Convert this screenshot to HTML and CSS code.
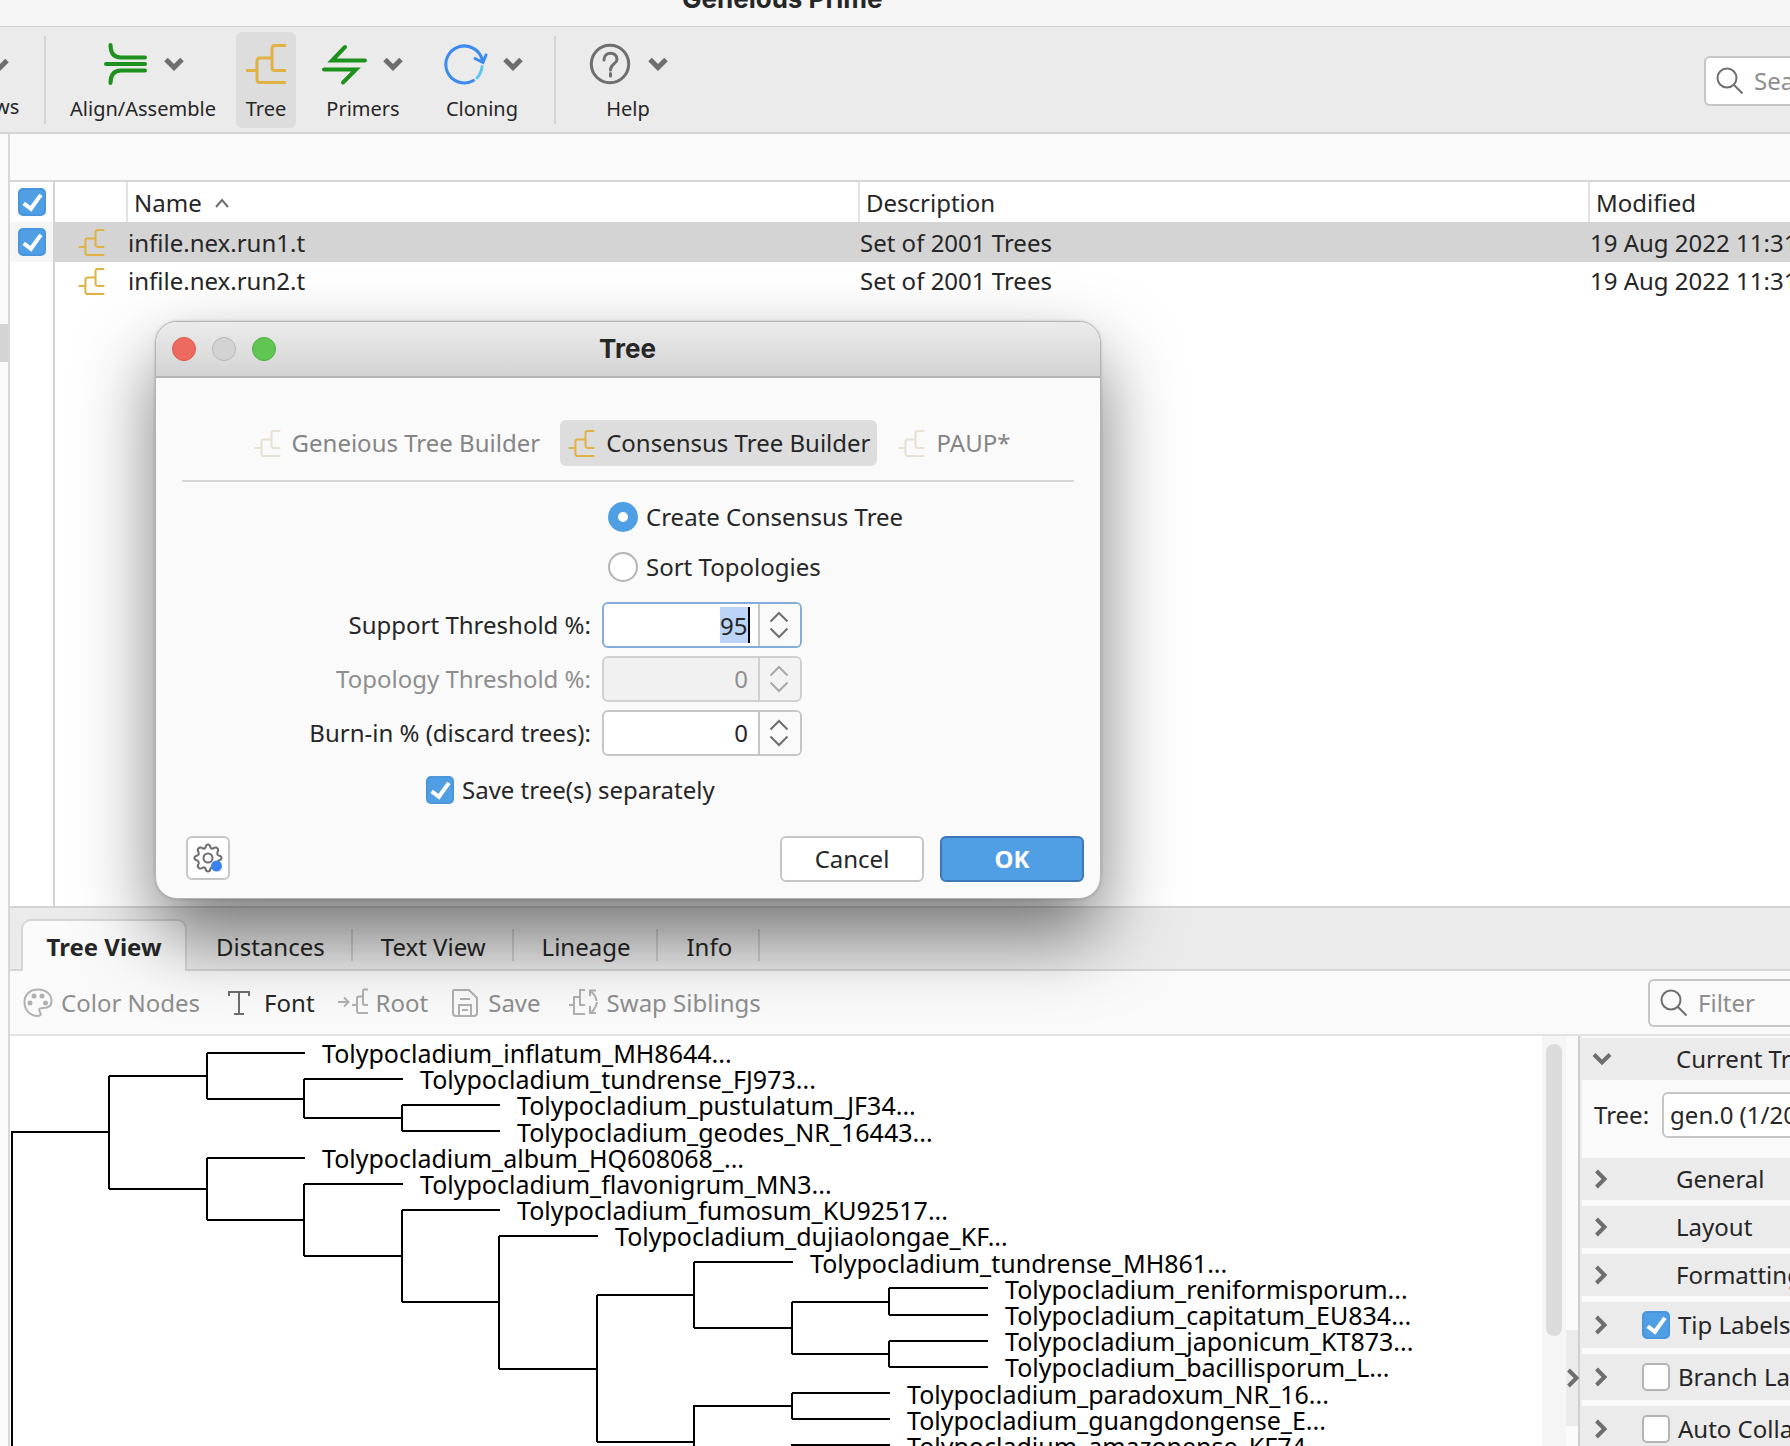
FILE: index.html
```html
<!DOCTYPE html>
<html lang="en">
<head>
<meta charset="utf-8">
<meta name="viewport" content="width=device-width, initial-scale=1">
<title>Geneious Prime</title>
<link rel="stylesheet" href="styles.css">
</head>
<body>
<svg class="defs" aria-hidden="true">
  <symbol id="i-tree" viewBox="0 0 40 40"><path d="M1 26.500H11M39 1.500H29Q26 1.500 26 4.500V23.500Q26 26.500 29 26.500H39M26 14H14Q11 14 11 17V35.500Q11 38.500 14 38.500H39"/></symbol>
  <symbol id="i-down" viewBox="0 0 20 14"><path d="M2 2.500L10 10.500L18 2.500"/></symbol>
  <symbol id="i-right" viewBox="0 0 14 20"><path d="M2.500 2L10.500 10L2.500 18"/></symbol>
  <symbol id="i-search" viewBox="0 0 28 28"><circle cx="11" cy="11" r="9.500"/><path d="M17.500 17.500L26.500 26.500"/></symbol>
  <symbol id="i-steps" viewBox="0 0 20 28"><path d="M1.500 10.500L10 2L18.500 10.500M1.500 17.500L10 26L18.500 17.500"/></symbol>
</svg>

<header class="titlebar"><span>Geneious Prime</span></header>

<nav class="toolbar">
  <div class="clip"><svg class="chev"><use href="#i-down"/></svg><span>ws</span></div>
  <i class="rule"></i>
  <button class="tool t-align"><span class="icons"><svg class="big green" viewBox="0 0 40 40"><path d="M4.500 1C4.500 9 8 13.500 15 13.500H39M0 20H39M4.500 39C4.500 31 8 26.500 15 26.500H39"/></svg><svg class="chev"><use href="#i-down"/></svg></span>Align/Assemble</button>
  <button class="tool t-tree on"><span class="icons"><svg class="big gold"><use href="#i-tree"/></svg></span>Tree</button>
  <button class="tool t-prim"><span class="icons"><svg class="big green wide" viewBox="0 0 42 40"><path d="M22 3L9 16.500H42M1 25.500H33L20 38.500"/></svg><svg class="chev"><use href="#i-down"/></svg></span>Primers</button>
  <button class="tool t-clon"><span class="icons"><svg class="big wide" viewBox="0 0 42 40"><path class="blue" d="M29.500 36.500A18.500 18.500 0 1 1 38.500 17M31 14.500L39 18.500L42 11"/><path class="cyan" d="M38 22.500Q37.500 29 33 34"/></svg><svg class="chev"><use href="#i-down"/></svg></span>Cloning</button>
  <i class="rule"></i>
  <button class="tool t-help"><span class="icons"><svg class="big grey" viewBox="0 0 40 40"><circle cx="20" cy="20" r="18.700"/><path d="M14 16C14 7 27 7 27 15.500C27 20 20.500 19.500 20.500 26"/><path d="M20.500 29.500V32"/></svg><svg class="chev"><use href="#i-down"/></svg></span>Help</button>
  <label class="search"><svg><use href="#i-search"/></svg><input type="text" placeholder="Search" aria-label="Search"></label>
</nav>

<div class="workspace">
  <aside class="sources"><div class="picked"></div></aside>
  <main class="main">
    <div class="strip"></div>
    <section class="docs">
      <table>
        <colgroup><col class="c-check"><col class="c-icon"><col class="c-name"><col class="c-desc"><col class="c-mod"></colgroup>
        <thead><tr>
          <th><input type="checkbox" class="tick" checked aria-label="Select all"></th><th></th>
          <th>Name <svg class="sort" viewBox="0 0 16 10"><path d="M2 9L8 2L14 9"/></svg></th><th>Description</th><th>Modified</th>
        </tr></thead>
        <tbody>
          <tr class="sel"><td><input type="checkbox" class="tick" checked aria-label="Select infile.nex.run1.t"></td><td><svg class="mini gold"><use href="#i-tree"/></svg></td><td>infile.nex.run1.t</td><td>Set of 2001 Trees</td><td>19 Aug 2022 11:31</td></tr>
          <tr class="row"><td></td><td><svg class="mini gold"><use href="#i-tree"/></svg></td><td>infile.nex.run2.t</td><td>Set of 2001 Trees</td><td>19 Aug 2022 11:31</td></tr>
          <tr class="rest"><td></td><td></td><td></td><td></td><td></td></tr>
        </tbody>
      </table>
    </section>
    <div class="tabs" role="tablist">
      <button role="tab" class="tab active" aria-selected="true">Tree View</button>
      <button role="tab" class="tab">Distances</button>
      <button role="tab" class="tab">Text View</button>
      <button role="tab" class="tab">Lineage</button>
      <button role="tab" class="tab">Info</button>
    </div>
    <div class="viewbar">
      <button disabled><svg viewBox="0 0 30 30"><path d="M15 28C6 28 1.500 21 1.500 14C1.500 6.500 7 1.500 15 1.500C23 1.500 28.500 6.500 28.500 13C28.500 18 25 20 20 20C15.500 20 15.500 22 17 24C18.500 26 17.500 28 15 28Z"/><g class="fill"><circle cx="11" cy="8" r="2.500"/><circle cx="19" cy="8" r="2.500"/><circle cx="7" cy="15" r="2.500"/><circle cx="22.500" cy="15" r="2.500"/></g></svg>Color Nodes</button>
      <button class="v-font"><svg viewBox="0 0 24 30"><path d="M2 8V4H22V8M12 4V26M7 26H17"/></svg>Font</button>
      <button disabled><svg viewBox="0 0 30 30"><path d="M0 14H10M6 9.500L10.500 14L6 18.500M14 17H19M30 1.500H26Q25 1.500 25 3V15.500Q25 17 27 17H30M25 8.500H21Q19 8.500 19 10.500V23Q19 25 21 25H30"/></svg>Root</button>
      <button disabled><svg viewBox="0 0 30 30"><path d="M4 2H19L27 10V25Q27 28 24 28H6Q3 28 3 25V4Q3 2 4 2ZM9 28V17H21V28M10 11H20M12 22H18"/></svg>Save</button>
      <button class="v-swap" disabled><svg viewBox="0 0 30 30"><path d="M0 17H4M16 2H11V17H16M11 9H5V26H16"/><path d="M21 3Q27 7 27.500 13M21 8V2.500H27M28 14Q27 20 22 25M21 18V25H27"/></svg>Swap Siblings</button>
      <label class="filter"><svg><use href="#i-search"/></svg><input type="text" placeholder="Filter" aria-label="Filter"></label>
    </div>
    <div class="viewer">
      <div class="canvas">
        <svg class="phylo" width="1500" height="410" role="img" aria-label="Phylogenetic tree">
          <path d="M2 410V96H99M99 40V153M99 40H197M197 17V63M197 17H295M197 63H294M294 43V82M294 43H393M294 82H392M392 69V95M392 69H490M392 95H490M99 153H197M197 122V184M197 122H295M197 184H294M294 148V220M294 148H393M294 220H392M392 174V266M392 174H490M392 266H489M489 200V333M489 200H588M489 333H587M587 259V406M587 259H684M684 226V292M684 226H783M684 292H782M782 266V318M782 266H879M879 252V279M879 252H978M879 279H978M782 318H879M879 305V331M879 305H978M879 331H978M587 406H684M684 410V370H782M782 357V383M782 357H880M782 383H880M782 410V409H880"/>
          <g>
            <text x="312" y="27">Tolypocladium_inflatum_MH8644...</text>
            <text x="410" y="53">Tolypocladium_tundrense_FJ973...</text>
            <text x="507" y="79">Tolypocladium_pustulatum_JF34...</text>
            <text x="507" y="106">Tolypocladium_geodes_NR_16443...</text>
            <text x="312" y="132">Tolypocladium_album_HQ608068_...</text>
            <text x="410" y="158">Tolypocladium_flavonigrum_MN3...</text>
            <text x="507" y="184">Tolypocladium_fumosum_KU92517...</text>
            <text x="605" y="210">Tolypocladium_dujiaolongae_KF...</text>
            <text x="800" y="237">Tolypocladium_tundrense_MH861...</text>
            <text x="995" y="263">Tolypocladium_reniformisporum...</text>
            <text x="995" y="289">Tolypocladium_capitatum_EU834...</text>
            <text x="995" y="315">Tolypocladium_japonicum_KT873...</text>
            <text x="995" y="341">Tolypocladium_bacillisporum_L...</text>
            <text x="897" y="368">Tolypocladium_paradoxum_NR_16...</text>
            <text x="897" y="394">Tolypocladium_guangdongense_E...</text>
            <text x="897" y="420">Tolypocladium_amazonense_KF74...</text>
          </g>
        </svg>
      </div>
      <div class="scroll"><i></i></div>
      <div class="collapse"><button aria-label="Hide options"><svg><use href="#i-right"/></svg></button></div>
      <aside class="options">
        <div class="opt short"><svg class="chev"><use href="#i-down"/></svg><span>Current Tree</span></div>
        <div class="pick"><label for="gen">Tree:</label><select id="gen"><option>gen.0 (1/2001)</option></select></div>
        <div class="opt short"><svg class="side"><use href="#i-right"/></svg><span>General</span></div>
        <div class="opt short"><svg class="side"><use href="#i-right"/></svg><span>Layout</span></div>
        <div class="opt short"><svg class="side"><use href="#i-right"/></svg><span>Formatting</span></div>
        <div class="opt"><svg class="side"><use href="#i-right"/></svg><label><input type="checkbox" class="tick" checked>Tip Labels</label></div>
        <div class="opt"><svg class="side"><use href="#i-right"/></svg><label><input type="checkbox" class="tick">Branch Labels</label></div>
        <div class="opt"><svg class="side"><use href="#i-right"/></svg><label><input type="checkbox" class="tick">Auto Collapse</label></div>
      </aside>
    </div>
  </main>
</div>

<section class="dialog" role="dialog" aria-labelledby="dlg-title">
  <header><span class="lights"><i class="red"></i><i></i><i class="go"></i></span><h2 id="dlg-title">Tree</h2></header>
  <div class="body">
    <div class="builders">
      <button class="off"><svg class="mini gold"><use href="#i-tree"/></svg>Geneious Tree Builder</button>
      <button class="on"><svg class="mini gold"><use href="#i-tree"/></svg>Consensus Tree Builder</button>
      <button class="off"><svg class="mini gold"><use href="#i-tree"/></svg>PAUP*</button>
    </div>
    <div class="radios">
      <label><input type="radio" name="mode" checked>Create Consensus Tree</label>
      <label><input type="radio" name="mode">Sort Topologies</label>
    </div>
    <div class="fields">
      <label for="f1">Support Threshold %:</label>
      <div class="spin focus"><span class="hl"><input id="f1" type="text" value="95"></span><button aria-label="Step support"><svg><use href="#i-steps"/></svg></button></div>
      <label for="f2" class="dim">Topology Threshold %:</label>
      <div class="spin dim"><input id="f2" type="text" value="0" disabled><button disabled aria-label="Step topology"><svg><use href="#i-steps"/></svg></button></div>
      <label for="f3">Burn-in % (discard trees):</label>
      <div class="spin"><input id="f3" type="text" value="0"><button aria-label="Step burn-in"><svg><use href="#i-steps"/></svg></button></div>
    </div>
    <label class="separate"><input type="checkbox" class="tick" checked>Save tree(s) separately</label>
    <footer>
      <button class="gear" aria-label="Settings"><svg viewBox="0 0 30 30"><path d="M12.500 4.500Q13 1.500 15 1.500T17.500 4.500Q18.200 6 20 5.500Q23 3.500 24.500 5.300T24.300 9.500Q23.800 11.500 25.500 12.500Q28.500 13 28.500 15T25.500 17.500Q23.800 18.500 24.300 20.500Q26.200 23 24.500 24.700T20 24.500Q18.200 24 17.500 25.500Q17 28.500 15 28.500T12.500 25.500Q11.800 24 10 24.500Q7 26.500 5.500 24.700T5.700 20.500Q6.200 18.500 4.500 17.500Q1.500 17 1.500 15T4.500 12.500Q6.200 11.500 5.700 9.500Q3.800 7 5.500 5.300T10 5.500Q11.800 6 12.500 4.500Z"/><circle cx="15" cy="15" r="4.500"/><circle class="dot" cx="23.500" cy="23" r="5.500"/></svg></button>
      <button class="btn">Cancel</button>
      <button class="btn primary">OK</button>
    </footer>
  </div>
</section>
</body>
</html>
```
FILE: styles.css
```css
* { box-sizing: border-box; }
html, body { height: 100%; }
body {
  margin: 0; display: flex; flex-direction: column; overflow: hidden;
  font: 24px/32px "Noto Sans", sans-serif; color: #262626; background: #fafafa;
}
button, input, select { font: inherit; color: inherit; }
button { background: none; border: 0; padding: 0; }
svg { fill: none; stroke: #6e6e6e; stroke-width: 2; flex: none; display: block; }
.defs { display: none; }
.gold { stroke: #dfb243; }
.green { stroke: #1c911c; }
.mini { width: 27px; height: 27px; stroke-width: 3; }
.chev { width: 20px; height: 14px; stroke-width: 5; }
.side { width: 14px; height: 20px; stroke-width: 5; }

.titlebar {
  height: 27px; flex: none; background: #f6f6f6; border-bottom: 1px solid #cdcdcd;
  padding-left: 682px; overflow: hidden; display: flex; align-items: flex-start;
  font: 700 26px/32px Inter, sans-serif;
}
.titlebar span { margin-top: -17px; white-space: nowrap; }

.toolbar {
  height: 107px; flex: none; background: #ebebeb; border-bottom: 2px solid #d4d4d4;
  display: flex; align-items: flex-start; padding-top: 5px; overflow: hidden;
  font-size: 20px; line-height: 28px;
}
.toolbar .rule { width: 2px; height: 88px; margin-top: 4px; background: #d6d6d6; flex: none; }
.clip { width: 44px; flex: none; display: flex; flex-direction: column; gap: 21px; padding-top: 26px; }
.clip .chev { margin-left: -11px; }
.clip span { margin-left: -6px; }
.tool { height: 96px; flex: none; border-radius: 6px; display: flex; flex-direction: column; align-items: center; padding-top: 12px; gap: 11px; }
.tool.on { background: #dddddd; }
.icons { display: flex; align-items: center; gap: 18px; height: 40px; }
.big { width: 40px; height: 40px; stroke-width: 3; stroke-linecap: round; overflow: visible; }
.green.big { stroke-width: 4; }
.wide { width: 42px; }
.blue { stroke: #3b8af0; }
.cyan { stroke: #5ac8f0; }
.t-align { width: 190px; padding-left: 4px; }
.t-align .icons { padding-left: 4px; }
.t-tree { width: 60px; }
.t-prim { width: 134px; }
.t-clon { width: 104px; margin-right: 20px; }
.t-clon .icons { gap: 17px; padding-left: 2px; }
.t-help { width: 144px; }
.t-help .icons { padding-left: 2px; }
.search { margin: 24px 0 0 auto; width: 86px; height: 50px; flex: none; background: #fff; border: 2px solid #c6c6c6; border-right: 0; border-radius: 6px 0 0 6px; display: flex; align-items: center; gap: 10px; padding-left: 10px; overflow: hidden; }
.search svg, .filter svg { width: 28px; height: 28px; }
.search input, .filter input { border: 0; background: none; outline: 0; padding: 0; width: 110px; flex: none; font-size: 24px; }
::placeholder { color: #8e8e8e; opacity: 1; }

.workspace { flex: 1; min-height: 0; display: flex; }
.sources { width: 10px; flex: none; border-right: 2px solid #d8d8d8; padding-top: 190px; }
.picked { height: 38px; background: #d4d4d4; }
.main { flex: 1; min-width: 0; display: flex; flex-direction: column; }
.strip { height: 48px; flex: none; background: #fbfbfb; border-bottom: 2px solid #d6d6d6; }

.docs { height: 726px; flex: none; background: #fff; border-bottom: 2px solid #d4d4d4; overflow: hidden; }
.docs table { width: 100%; height: 100%; table-layout: fixed; border-collapse: separate; border-spacing: 0; white-space: nowrap; }
.docs th, .docs td { text-align: left; font-weight: 400; padding: 1px 0 0; overflow: hidden; }
.docs thead tr, .docs .sel { height: 40px; }
.docs .row { height: 37px; }
.c-check { width: 45px; } .c-icon { width: 73px; } .c-name { width: 732px; } .c-desc { width: 730px; }
.docs th { border-right: 2px solid #e2e2e2; padding-left: 6px; }
.docs th:last-child { border-right: 0; }
.docs tr > :first-child { border-right: 2px solid #d4d4d4; padding: 0 0 0 8px; }
.docs tr > td:nth-child(2) { padding-left: 23px; }
.docs .sel td { background: #d4d4d4; }
.docs .sel td:first-child { background: #f5f5f5; }
.docs .rest { height: auto; }
.sort { display: inline-block; width: 16px; height: 10px; margin-left: 6px; vertical-align: 4px; }

.tick {
  appearance: none; display: block; flex: none; width: 28px; height: 28px; margin: 0;
  border: 2px solid #b4b4b4; border-radius: 5px; background: #fff;
}
.tick:checked { border-color: #4996dc; background: #509ee3; position: relative; }
.tick:checked::after { content: ""; position: absolute; left: 7px; top: 1px; width: 7px; height: 15px; border: solid #fff; border-width: 0 4px 4px 0; transform: rotate(36deg); }

.tabs { height: 63px; flex: none; background: #ebebeb; border-bottom: 2px solid #d6d6d6; display: flex; align-items: center; padding-left: 11px; }
.tab { height: 32px; margin-top: 12px; padding: 2px 26px 0 28px; border-right: 2px solid #cfcfcf; line-height: 32px; }
.tab.active { height: 52px; width: 166px; padding: 2px 0 0; margin: 11px 1px 0 0; align-self: flex-start; border: 2px solid #d6d6d6; border-bottom: 0; border-radius: 10px 10px 0 0; background: #fafafa; font-weight: 700; }
.viewbar { height: 65px; flex: none; background: #fafafa; border-bottom: 2px solid #e2e2e2; display: flex; align-items: center; padding-left: 13px; gap: 22px; overflow: hidden; }
.viewbar button { display: flex; align-items: center; gap: 8px; flex: none; }
.viewbar button svg { width: 30px; height: 30px; }
.viewbar .v-font svg { width: 24px; }
.viewbar .v-font { gap: 13px; margin: 0 1px 0 5px; }
.viewbar .v-swap { margin-left: 6px; }
.viewbar button:disabled { color: #8e8e8e; }
.viewbar button:disabled svg { stroke: #b0b0b0; }
.fill { fill: #b0b0b0; stroke: none; }
.filter { margin-left: auto; width: 142px; height: 48px; flex: none; border: 2px solid #c6c6c6; border-right: 0; border-radius: 6px 0 0 6px; display: flex; align-items: center; gap: 10px; padding-left: 10px; overflow: hidden; }

.viewer { flex: 1; min-height: 0; display: flex; overflow: hidden; }
.canvas { flex: 1; min-width: 0; background: #fff; overflow: hidden; }
.phylo { stroke: #000; }
.phylo text { stroke: none; fill: #000; font-size: 25px; }
.scroll { width: 24px; flex: none; background: #f5f5f5; padding: 8px 4px; }
.scroll i { display: block; height: 292px; border-radius: 8px; background: #dbdbdb; }
.collapse { width: 14px; flex: none; padding-top: 294px; border-right: 2px solid #cfcfcf; }
.collapse button { display: flex; align-items: center; width: 12px; height: 96px; background: #ebebeb; }
.collapse svg { width: 14px; height: 20px; stroke-width: 4; }
.options { width: 210px; flex: none; border-left: 2px solid #ececec; padding-top: 2px; display: flex; flex-direction: column; gap: 6px; white-space: nowrap; overflow: hidden; }
.opt { height: 46px; flex: none; background: #ebebeb; display: flex; align-items: center; padding-left: 12px; }
.opt.short { height: 42px; }
.opt .chev, .opt .side { stroke-width: 4; }
.opt .chev { margin: 0 64px 0 -2px; }
.opt .side { margin-right: 68px; }
.opt label { display: flex; align-items: center; gap: 8px; margin-left: -34px; }
.pick { height: 78px; margin: -6px 0; padding: 0 0 8px 12px; flex: none; display: flex; align-items: center; gap: 13px; }
.pick select { appearance: none; width: 200px; height: 46px; flex: none; border: 2px solid #c6c6c6; border-radius: 6px; background: #fff; padding: 0 6px; }

.dialog {
  position: absolute; left: 155px; top: 321px; width: 946px; border: 1px solid #b4b4b4; border-radius: 22px;
  background: #fafafa; overflow: hidden;
  box-shadow: 0 36px 76px rgba(0, 0, 0, .52), 0 0 3px rgba(0, 0, 0, .2);
}
.dialog header { height: 56px; border-bottom: 2px solid #b4b4b4; background: linear-gradient(#ececec, #d3d3d3); display: grid; grid-template-columns: 1fr auto 1fr; align-items: center; padding: 0 17px 0 16px; }
.lights { display: flex; gap: 16px; }
.lights i { width: 24px; height: 24px; border-radius: 50%; background: #d3d3d3; border: 1px solid #b8b8b8; }
.lights .red { background: #ed6a5e; border-color: #d8574c; }
.lights .go { background: #61c554; border-color: #4fae43; }
.dialog h2 { margin: 0; font: 700 26px/32px Inter, sans-serif; }
.body { padding: 42px 16px 16px 26px; display: flex; flex-direction: column; }
.builders { display: flex; justify-content: center; gap: 13px; margin-right: 10px; padding: 0 0 14px 7px; border-bottom: 2px solid #d6d6d6; }
.builders button { display: flex; align-items: center; gap: 11px; height: 46px; padding: 0 7px 0 8px; border-radius: 6px; }
.builders .on { background: #dddddd; }
.builders .off { color: #858585; }
.builders .off svg { stroke: #e6e1d3; }
.radios { display: flex; flex-direction: column; gap: 20px; margin: 20px 0 20px 426px; }
.radios label { display: flex; align-items: center; gap: 8px; height: 30px; }
.radios input { appearance: none; width: 30px; height: 30px; margin: 0; border: 2px solid #b4b4b4; border-radius: 50%; background: #fff; }
.radios input:checked { border: 10px solid #509ee3; }
.fields { display: grid; grid-template-columns: 409px 200px; gap: 8px 11px; align-items: center; text-align: right; }
.spin { height: 46px; border: 2px solid #c6c6c6; border-radius: 6px; background: #fff; display: flex; overflow: hidden; }
.spin input { flex: 1; width: 100%; min-width: 0; border: 0; outline: 0; background: none; text-align: right; padding: 0 10px 0 0; }
.spin button { width: 42px; flex: none; border-left: 2px solid #c6c6c6; background: #fafafa; display: grid; place-items: center; padding: 0 2px 1px 0; }
.spin svg { width: 20px; height: 28px; }
.spin.focus { border-color: #84addc; }
.hl { flex: 1; min-width: 0; display: flex; justify-content: flex-end; align-items: center; padding-right: 8px; }
.hl input { flex: none; width: 30px; height: 36px; padding: 0 1px 0 0; background: #bcd4f8; border-right: 2px solid #000; }
.fields .dim { color: #8e8e8e; }
.spin.dim { background: #f1f1f1; border-color: #d0d0d0; }
.spin.dim button { background: #f3f3f3; border-color: #d0d0d0; }
.spin.dim svg { stroke: #a8a8a8; }
.separate { display: flex; align-items: center; gap: 8px; margin: 18px 0 30px 244px; }
.dialog footer { display: flex; align-items: flex-start; gap: 16px; padding-left: 4px; }
.gear { width: 44px; height: 44px; margin-right: auto; border: 2px solid #c6c6c6; border-radius: 6px; background: #fff; display: grid; place-items: center; }
.gear svg { width: 30px; height: 30px; }
.gear .dot { fill: #3b82f0; stroke: none; }
.btn { width: 144px; height: 46px; border: 2px solid #c6c6c6; border-radius: 6px; background: #fff; }
.primary { border-color: #3c78b8; background: #509ee3; color: #fff; font-weight: 700; }
```
